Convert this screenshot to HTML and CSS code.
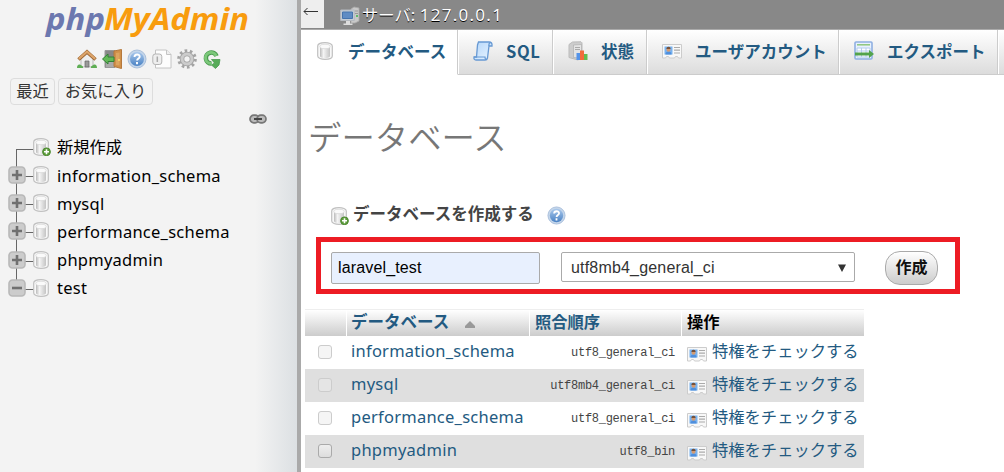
FILE: index.html
```html
<!DOCTYPE html>
<html lang="ja">
<head>
<meta charset="utf-8">
<title>phpMyAdmin</title>
<link rel="stylesheet" href="styles.css">
</head>
<body>
<svg class="defs" width="0" height="0">
    <defs>
        <linearGradient id="g-cyl"><stop offset="0" stop-color="#bbb"/><stop offset=".35" stop-color="#f4f4f4"/><stop offset="1" stop-color="#c4c4c4"/></linearGradient>
        <linearGradient id="g-blue" x2="0" y2="1"><stop offset="0" stop-color="#a9c8ec"/><stop offset="1" stop-color="#4a82c4"/></linearGradient>
        <linearGradient id="g-sheet" x2="1" y2="1"><stop offset="0" stop-color="#b4d6fa"/><stop offset="1" stop-color="#eaf5ff"/></linearGradient>
        <symbol id="db" viewBox="0 0 16 18">
            <path d="M.7 4C.7-.5 15.300-.5 15.300 4v10c0 4.500-14.600 4.500-14.600 0z" fill="#f8f8f8" stroke="#c0c0c0" stroke-width="1.200"/>
            <path d="M3 5v9c0 2.800 10 2.800 10 0V5z" fill="url(#g-cyl)"/>
            <ellipse cx="8" cy="4.500" rx="5.200" ry="2.200" fill="#fafafa" stroke="#d4d4d4" stroke-width=".7"/>
        </symbol>
        <symbol id="db-new" viewBox="0 0 18 18">
            <use href="#db" width="16" height="18"/>
            <circle cx="13.500" cy="13.800" r="3.900" fill="#5c9b3a" stroke="#4c8a30"/>
            <path d="M13.500 11.300v5M11 13.800h5" stroke="#fff" stroke-width="1.600"/>
        </symbol>
        <symbol id="home" viewBox="0 0 20 20">
            <path d="M4 9v9h12V9l-6-6z" fill="#eee" stroke="#bbb"/>
            <path d="M8 18v-6h4v6z" fill="#999" stroke="#666" stroke-width=".7"/>
            <path d="M1.500 10.500L10 3l8.500 7.500" fill="none" stroke="#99622f" stroke-width="3.600"/>
            <path d="M1.800 9.800L10 2.600l8.200 7.200" fill="none" stroke="#dca46a" stroke-width="2.200"/>
            <path d="M0 19q0-4 3-3.500l3 2V19zM20 19q0-4-3-3.500l-3 2V19z" fill="#5fae55"/>
        </symbol>
        <symbol id="exit" viewBox="0 0 20 20">
            <path d="M3 1.500h10v17H3z" fill="#888" stroke="#999"/>
            <path d="M4 13h8v5H4z" fill="#aaa"/>
            <path d="M12 2l7.500-1.500v19L12 17.500z" fill="#d09049" stroke="#b5783c"/>
            <path d="M14 4l3.500-.5v13L14 16z" fill="#dda560"/>
            <circle cx="17" cy="11" r=".9" fill="#ffe26a"/>
            <path d="M.5 10L6 5v3h6v4.500H6V15z" fill="#63b857" stroke="#328234"/>
        </symbol>
        <symbol id="help" viewBox="0 0 20 20">
            <circle cx="10" cy="10" r="9" fill="#c3d5ea" stroke="#a9bfdb"/>
            <circle cx="10" cy="10" r="7" fill="url(#g-blue)"/>
            <path d="M7.500 8c0-3.300 5.200-3.200 5.200-.3 0 1.800-2.600 1.700-2.600 3.800M10 13v2.200" fill="none" stroke="#fff" stroke-width="1.900"/>
        </symbol>
        <symbol id="docs" viewBox="0 0 20 20">
            <path d="M3.500 1h11L19 5.500V19H3.500z" fill="#fdfdfd" stroke="#c4c4c4"/>
            <path d="M14.500 1v4.500H19" fill="#eee" stroke="#c4c4c4"/>
            <rect x=".8" y="5" width="9" height="10.500" rx="2.500" fill="#eee" stroke="#b4b4b4"/>
            <path d="M5.300 7.500v5.500" stroke="#aaa" stroke-width="1.500"/>
        </symbol>
        <symbol id="gear" viewBox="0 0 20 20">
            <circle cx="10" cy="10" r="8.300" fill="none" stroke="#a4a4a4" stroke-width="3" stroke-dasharray="2.600 2.615"/>
            <circle cx="10" cy="10" r="5" fill="none" stroke="#a2a2a2" stroke-width="4.600"/>
            <circle cx="10" cy="10" r="5" fill="none" stroke="#ccc" stroke-width="3"/>
        </symbol>
        <symbol id="reload" viewBox="0 0 20 20">
            <path d="M14.500 7A5.500 5.500 0 1 0 9.500 14.500" fill="none" stroke="#4a9a50" stroke-width="4.600"/>
            <path d="M9.500 10.500h8.500L17 16l-3.500 3.500-4-3.500 3-2z" fill="#57ac59" stroke="#4a9a50" stroke-width=".8"/>
            <path d="M14.200 7A5.500 5.500 0 1 0 9.800 14.300" fill="none" stroke="#7cc87a" stroke-width="2.800"/>
        </symbol>
        <symbol id="link" viewBox="0 0 18 10">
            <rect x="1" y="1.200" width="9" height="7.600" rx="3.800" fill="#bbb" stroke="#777" stroke-width="1.700"/>
            <rect x="8" y="1.200" width="9" height="7.600" rx="3.800" fill="#bbb" stroke="#777" stroke-width="1.700"/>
            <path d="M5 5h8" stroke="#444" stroke-width="2"/>
        </symbol>
        <symbol id="plus" viewBox="0 0 18 18">
            <rect x="1" y="1" width="16" height="16" rx="3.500" fill="#ccc" stroke="#b8b8b8" stroke-width="1.600"/>
            <path d="M4 9h10M9 4v10" stroke="#707070" stroke-width="2.600"/>
        </symbol>
        <symbol id="minus" viewBox="0 0 18 18">
            <rect x="1" y="1" width="16" height="16" rx="3.500" fill="#ccc" stroke="#b8b8b8" stroke-width="1.600"/>
            <path d="M4 9h10" stroke="#707070" stroke-width="2.600"/>
        </symbol>
        <symbol id="server" viewBox="0 0 20 20">
            <path d="M11 3l3-2 5 1v13l-4 2h-4z" fill="#c9c9c9" stroke="#aaa" stroke-width=".8"/>
            <path d="M15 5h3M15 7.500h3" stroke="#999"/>
            <circle cx="17" cy="10" r="1" fill="#3ab54a"/>
            <path d="M.7 4h13.600v10.500H.7z" fill="#c5cdd6" stroke="#b4b9bf"/>
            <path d="M2.500 6h10v6.500h-10z" fill="#5f8cc4" stroke="#4674ad"/>
            <path d="M6 15h4v2.500h2.500v1.500h-9v-1.500H6z" fill="#ddd"/>
        </symbol>
        <symbol id="sql" viewBox="0 0 20 20">
            <path d="M5.500 1H16q3.500 0 3 4h-3l-1.500 12q-.4 2-2.500 2H3q-2.500 0-2-3h2.500L4.500 4z" fill="url(#g-sheet)" stroke="#6799d3" stroke-width="1.300"/>
            <path d="M16 5q-.5-3 1.500-3.500M1 16h11q0 2.500 1.500 2.500" fill="none" stroke="#6799d3" stroke-width="1.200"/>
        </symbol>
        <symbol id="status" viewBox="0 0 20 20">
            <path d="M1 3.500L4.500 1 13 .8l1 1V16l-4 3L1 16.500z" fill="#ccc" stroke="#bbb"/>
            <path d="M5.500 4l8-.5V17l-8-.5z" fill="#e4e4e4" stroke="#aaa" stroke-width=".6"/>
            <path d="M7 6.500h5M7 8.500h5" stroke="#aaa"/>
            <path d="M8.500 12h4v7h-4z" fill="#5594e9"/>
            <path d="M12 9.500h4V19h-4z" fill="#f16a3b"/>
            <path d="M16 13h3.500v6H16z" fill="#62bb4f"/>
        </symbol>
        <symbol id="card" viewBox="0 0 20 15">
            <path d="M.5.5h19v13.500h-3l-1-1.500h-2L12.500 14h-5l-1-1.500h-2l-1 1.500h-3z" fill="#f8f8f8" stroke="#ccc"/>
            <path d="M2.500 2.500h8v8h-8z" fill="#78b2ef"/>
            <path d="M3.500 10.500q0-3 3-3t3 3z" fill="#4f8fdd"/>
            <circle cx="6.500" cy="5.700" r="2" fill="#d59a70"/>
            <path d="M4.300 5q0-2.300 2.200-2.300T8.700 5z" fill="#755039"/>
            <path d="M12 3.500h6M12 6.200h6M12 9h6" stroke="#aaa" stroke-width="1.200"/>
        </symbol>
        <symbol id="export" viewBox="0 0 20 20">
            <rect x="1" y="1" width="17" height="17" rx="1" fill="#e8f1fd" stroke="#8fb0e2" stroke-width="1.600"/>
            <path d="M3 3.800h13" stroke="#8ec67c" stroke-width="1.500"/>
            <path d="M3 7h13v9H3zM7.500 7v9M12 7v9M3 10h13" fill="#fff" stroke="#b4cdee"/>
            <path d="M1 11.500h14V9l5 4-5 4v-2.500H1z" fill="#53a34c"/>
        </symbol>
    </defs>
</svg>
<div class="page">
    <div class="navigation">
        <svg class="logo" width="208" height="38" viewBox="0 0 208 38">
            <text x="3" y="30" textLength="59" lengthAdjust="spacingAndGlyphs" fill="#6c78af">php</text>
            <text x="61" y="30" textLength="145" lengthAdjust="spacingAndGlyphs" fill="#f89c0e">MyAdmin</text>
        </svg>
        <div class="nav-icons">
            <svg><use href="#home"/></svg>
            <svg><use href="#exit"/></svg>
            <svg><use href="#help"/></svg>
            <svg><use href="#docs"/></svg>
            <svg><use href="#gear"/></svg>
            <svg><use href="#reload"/></svg>
        </div>
        <div class="nav-buttons">
            <a class="recent">最近</a>
            <a class="favorite">お気に入り</a>
        </div>
        <svg class="link-icon" width="18" height="10"><use href="#link"/></svg>
        <ul class="tree">
            <li class="first"><svg class="tree-new"><use href="#db-new"/></svg><span class="new">新規作成</span></li>
            <li><svg class="toggle"><use href="#plus"/></svg><svg class="tree-db"><use href="#db"/></svg><span class="name">information_schema</span></li>
            <li><svg class="toggle"><use href="#plus"/></svg><svg class="tree-db"><use href="#db"/></svg><span class="name">mysql</span></li>
            <li><svg class="toggle"><use href="#plus"/></svg><svg class="tree-db"><use href="#db"/></svg><span class="name">performance_schema</span></li>
            <li><svg class="toggle"><use href="#plus"/></svg><svg class="tree-db"><use href="#db"/></svg><span class="name">phpmyadmin</span></li>
            <li class="last"><svg class="toggle"><use href="#minus"/></svg><svg class="tree-db"><use href="#db"/></svg><span class="name">test</span></li>
        </ul>
    </div>
    <div class="content">
        <div class="serverinfo">
            <div class="collapse"><svg width="16" height="9" viewBox="0 0 16 9"><path d="M15 4.500H1M4.500 1L1 4.500 4.500 8" fill="none" stroke="#333"/></svg></div>
            <svg class="server-icon"><use href="#server"/></svg>
            <span>サーバ: <span class="host">127.0.0.1</span></span>
        </div>
        <div class="tabs">
            <a class="tab tab-db active"><svg><use href="#db"/></svg>データベース</a>
            <a class="tab tab-sql"><svg><use href="#sql"/></svg>SQL</a>
            <a class="tab tab-status"><svg><use href="#status"/></svg>状態</a>
            <a class="tab tab-users"><svg><use href="#card"/></svg>ユーザアカウント</a>
            <a class="tab tab-export"><svg><use href="#export"/></svg>エクスポート</a>
            <a class="tab tab-rest"></a>
        </div>
        <h1>データベース</h1>
        <div class="create-title">
            <svg class="new-icon"><use href="#db-new"/></svg>
            <strong>データベースを作成する</strong>
            <svg class="help-icon"><use href="#help"/></svg>
        </div>
        <form class="create-form">
            <input class="db-name" type="text" value="laravel_test">
            <div class="collation">utf8mb4_general_ci<svg width="8" height="8" viewBox="0 0 8 8"><path d="M0 .5h8L4 8z" fill="#333"/></svg></div>
            <button class="create" type="button">作成</button>
        </form>
        <table class="databases">
            <thead>
                <tr>
                    <th class="col-check"></th>
                    <th class="col-name">データベース<svg class="sort" width="10" height="7" viewBox="0 0 10 7"><path d="M5 0l5 5v2H0V5z" fill="#999"/></svg></th>
                    <th class="col-collation">照合順序</th>
                    <th class="col-action">操作</th>
                </tr>
            </thead>
            <tbody>
                <tr>
                    <td><span class="check disabled"></span></td>
                    <td class="name">information_schema</td>
                    <td class="value">utf8_general_ci</td>
                    <td class="action"><svg><use href="#card"/></svg>特権をチェックする</td>
                </tr>
                <tr>
                    <td><span class="check disabled"></span></td>
                    <td class="name">mysql</td>
                    <td class="value">utf8mb4_general_ci</td>
                    <td class="action"><svg><use href="#card"/></svg>特権をチェックする</td>
                </tr>
                <tr>
                    <td><span class="check disabled"></span></td>
                    <td class="name">performance_schema</td>
                    <td class="value">utf8_general_ci</td>
                    <td class="action"><svg><use href="#card"/></svg>特権をチェックする</td>
                </tr>
                <tr>
                    <td><span class="check"></span></td>
                    <td class="name">phpmyadmin</td>
                    <td class="value">utf8_bin</td>
                    <td class="action"><svg><use href="#card"/></svg>特権をチェックする</td>
                </tr>
            </tbody>
        </table>
    </div>
</div>
</body>
</html>
```
FILE: styles.css
```css
* {
    box-sizing: border-box;
}

body {
    margin: 0;
    background: #fff;
    color: #444;
    font-family: "Noto Sans CJK JP", sans-serif;
    font-size: 16.3px;
    line-height: 24px;
    overflow: hidden;
}

svg {
    display: block;
    flex: none;
}

.defs {
    position: absolute;
}

.page {
    display: flex;
    height: 472px;
}

/* left panel */
.navigation {
    width: 301px;
    flex: none;
    border-right: 4px solid #aaa;
    background: linear-gradient(to right, #f3f3f3 255px, #dce0e3 297px);
    color: #000;
}

.logo {
    margin-left: 43px;
    overflow: visible;
    font: italic bold 31px "Noto Sans", sans-serif;
}

.nav-icons {
    display: flex;
    gap: 5px;
    margin: 11px 0 0 77px;
}

.nav-icons svg {
    width: 20px;
    height: 20px;
}

.nav-buttons {
    display: flex;
    gap: 3px;
    margin: 9px 0 0 10px;
    color: #333;
    line-height: 22px;
}

.nav-buttons a {
    height: 27px;
    border: 1px solid #ddd;
    border-radius: 4px;
    text-align: center;
}

.recent {
    width: 45px;
}

.favorite {
    width: 95px;
}

.link-icon {
    margin: 9px 0 0 249px;
}

.tree {
    list-style: none;
    margin: 9px 0 0;
    padding: 0;
}

.tree li {
    display: flex;
    align-items: center;
    height: 28.2px;
    padding-left: 8px;
    background: linear-gradient(#666, #666) 16px 0 / 1px 100% no-repeat,
        linear-gradient(#666, #666) 16px 15px / 18px 1px no-repeat;
}

.tree li.first {
    height: 28px;
    padding-left: 33px;
    background: linear-gradient(#666, #666) 16px 16px / 1px 100% no-repeat,
        linear-gradient(#666, #666) 16px 16px / 18px 1px no-repeat;
}

.tree li.last {
    background: linear-gradient(#666, #666) 16px 0 / 1px 10px no-repeat,
        linear-gradient(#666, #666) 16px 15px / 18px 1px no-repeat;
}

.toggle {
    width: 18px;
    height: 18px;
    margin-right: 7px;
}

.tree-db {
    width: 16px;
    height: 18px;
    margin-right: 8px;
}

.tree-new {
    width: 18px;
    height: 18px;
    margin-right: 6px;
}

.new {
    padding-bottom: 2px;
}

.name {
    font-family: "Noto Sans", sans-serif;
    font-size: 16.5px;
    letter-spacing: 0.25px;
}

.tree .name {
    padding-top: 1px;
}

/* right panel */
.content {
    width: 703px;
    overflow: hidden;
}

.serverinfo {
    display: flex;
    height: 30px;
    background: #888;
    border-bottom: 1px solid #aaa;
    color: #fff;
    text-shadow: 0 1px 0 #000;
    line-height: 28px;
}

.host {
    margin-left: 1px;
    font-family: "Noto Sans", sans-serif;
    font-size: 17px;
    letter-spacing: 1.25px;
}

.collapse {
    width: 23px;
    height: 28px;
    padding: 7px 0 0 2px;
    background: #eee;
}

.server-icon {
    width: 20px;
    height: 20px;
    margin: 6px 2px 0 16px;
}

.tabs {
    display: flex;
    height: 45px;
}

.tab {
    display: flex;
    align-items: center;
    flex: none;
    border-right: 1px solid #ccc;
    border-bottom: 1px solid #ccc;
    box-shadow: inset 1px 0 0 #fff;
    background: linear-gradient(#fff, #dcdcdc);
    color: #235a81;
    font-size: 16.5px;
    font-weight: bold;
    padding: 0 0 3px 15px;
}

.tab svg {
    width: 20px;
    height: 20px;
    margin-right: 13px;
}

.tab.active {
    padding-left: 16px;
    background: #fff;
    border-bottom-color: #fff;
}

.tab-db {
    width: 157px;
}

.tab-db svg {
    width: 16px;
    height: 18px;
    margin-right: 15px;
}

.tab-sql {
    width: 95px;
    letter-spacing: 0.6px;
}

.tab-status {
    width: 94px;
}

.tab-users {
    width: 192px;
}

.tab-users svg {
    height: 15px;
    margin-top: 2px;
}

.tab-export {
    width: 159px;
}

.tab-rest {
    width: 120px;
}

h1 {
    margin: 37px 0 0 7px;
    font-size: 33.4px;
    font-weight: 350;
    line-height: 48px;
    color: #777;
}

.create-title {
    display: flex;
    align-items: center;
    height: 30px;
    margin: 39px 0 0 30px;
}

.create-title strong {
    margin: 0 13px 3px 4px;
    font-size: 16.5px;
}

.new-icon {
    width: 18px;
    height: 18px;
    margin-top: 3px;
}

.help-icon {
    width: 19px;
    height: 19px;
    margin-top: 3px;
}

/* highlighted form */
.create-form {
    display: flex;
    width: 644px;
    height: 57px;
    margin: 8px 0 0 15px;
    border: 5px solid #ed1c24;
    padding: 9px 0 0 10px;
}

.db-name,
.collation {
    border: 1px solid #aaa;
    border-radius: 2px;
    font-family: "Liberation Sans", sans-serif;
    font-size: 16px;
}

.db-name {
    width: 209px;
    height: 32px;
    margin: 1px 21px 0 0;
    padding: 0 6px 1px;
    background: #e8f0fe;
    color: #000;
    letter-spacing: 0.15px;
}

.collation {
    display: flex;
    align-items: center;
    justify-content: space-between;
    width: 294px;
    height: 30px;
    margin-top: 1px;
    padding: 1px 8px 0 9px;
    color: #333;
    letter-spacing: 0.18px;
}

.create {
    width: 53px;
    height: 34px;
    margin-left: 30px;
    padding: 0 0 4px;
    border: 1px solid #aaa;
    border-radius: 15px;
    background: linear-gradient(#fff, #ccc);
    font: bold 16px "Noto Sans CJK JP", sans-serif;
    color: #111;
}

/* database list */
.databases {
    width: 559px;
    margin: 15px 0 0 4px;
    table-layout: fixed;
    border-collapse: separate;
    border-spacing: 0;
}

.databases th,
.databases td {
    padding: 0;
}

.databases th {
    height: 27px;
    border-top: 1px solid #eee;
    background: linear-gradient(#fff, #ccc);
    box-shadow: inset -1px 0 0 #fff;
    color: #235a81;
    text-align: left;
    line-height: 22px;
    padding: 0 0 4px 4px;
}

.databases .col-check {
    width: 42px;
}

.databases .col-name {
    width: 183px;
    font-size: 16.5px;
}

.databases .col-collation {
    width: 152px;
    padding-left: 5px;
}

.databases .col-action {
    padding-left: 5px;
    box-shadow: none;
    color: #000;
}

.sort {
    display: inline-block;
    margin-left: 16px;
}

.databases td {
    height: 33px;
}

.databases tbody tr:nth-child(even) {
    background: #dfdfdf;
}

.databases .name {
    padding: 0 0 3px 4px;
    color: #235a81;
}

.databases .value {
    padding-right: 7px;
    font-family: "Liberation Mono", monospace;
    font-size: 12px;
    letter-spacing: -0.27px;
    text-align: right;
}

.databases .action {
    padding: 0 0 5px 5px;
    color: #235a81;
    white-space: nowrap;
}

.action svg {
    display: inline-block;
    width: 20px;
    height: 15px;
    margin-right: 5px;
    vertical-align: -5px;
}

.check {
    display: block;
    width: 14px;
    height: 14px;
    margin: 0 0 1px 13px;
    border: 1px solid #aaa;
    border-radius: 3px;
    background: linear-gradient(#eee, #ddd);
}

.check.disabled {
    border-color: #ccc;
    background: rgba(235, 235, 235, 0.5);
}
```
